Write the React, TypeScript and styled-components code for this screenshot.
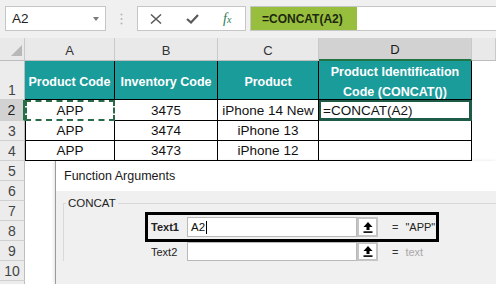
import * as React from 'react';
import styled, { createGlobalStyle } from 'styled-components';

const GlobalStyle = createGlobalStyle`
  html, body {
    margin: 0;
    padding: 0;
    background: #fff;
  }
  body {
    overflow: hidden;
  }
`;

const Screen = styled.div`
  position: relative;
  width: 496px;
  height: 284px;
  overflow: hidden;
  background: #fff;
  font-family: "Liberation Sans", Arial, sans-serif;
`;

// formula bar

const FormulaBar = styled.div`
  display: flex;
  align-items: flex-start;
  height: 38px;
  box-sizing: border-box;
  padding: 6px 0 0 5px;
  background: #f0f0f0;
`;

const NameBox = styled.div`
  display: flex;
  align-items: center;
  justify-content: space-between;
  width: 101px;
  height: 25px;
  box-sizing: border-box;
  padding: 0 6px;
  border: 1px solid #c6c6c6;
  background: #fff;
  font-size: 13.5px;
  color: #222;
`;

const DropArrow = styled.span`
  width: 0;
  height: 0;
  border-left: 3.5px solid transparent;
  border-right: 3.5px solid transparent;
  border-top: 4px solid #7a7a7a;
`;

const Grip = styled.div`
  display: flex;
  align-items: center;
  justify-content: center;
  width: 31px;
  height: 25px;
`;

const FxBox = styled.div`
  display: flex;
  align-items: center;
  gap: 24px;
  width: 109px;
  height: 25px;
  box-sizing: border-box;
  padding-left: 12px;
  border: 1px solid #c6c6c6;
  background: #fff;
`;

const FxGlyph = styled.span`
  font-family: "Liberation Serif", "Times New Roman", serif;
  font-style: italic;
  font-size: 14px;
  color: #2e7a56;
  line-height: 1;

  small {
    font-size: 10px;
  }
`;

const FormulaInput = styled.div`
  display: flex;
  flex: 1;
  height: 25px;
  margin-left: 4px;
  box-sizing: border-box;
  border: 1px solid #c6c6c6;
  border-right: none;
  background: #fff;
`;

const FormulaMark = styled.div`
  display: flex;
  align-items: center;
  width: 106px;
  box-sizing: border-box;
  padding-left: 11px;
  background: #97bf3d;
  font-size: 12px;
  font-weight: bold;
  color: #1d2710;
`;

// sheet grid

const Sheet = styled.div`
  display: grid;
  grid-template-columns: 25px 90px 103px 101px 153px 1fr;
  grid-template-rows: 23px 39px 21px 20px 20px repeat(7, 20px);
`;

const Corner = styled.div`
  display: flex;
  align-items: flex-end;
  justify-content: flex-end;
  padding: 0 2px 4px 0;
  background: #e9e9e9;
  border-right: 1px solid #c9c9c9;
  border-bottom: 1px solid #bdbdbd;
`;

const ColHead = styled.div<{ $active?: boolean }>`
  display: flex;
  align-items: center;
  justify-content: center;
  padding-top: 2px;
  background: ${(p) => (p.$active ? '#d2d2d2' : '#e9e9e9')};
  border-right: 1px solid #c9c9c9;
  border-bottom: ${(p) => (p.$active ? '2px solid #217346' : '1px solid #bdbdbd')};
  font-size: 13px;
  color: ${(p) => (p.$active ? '#1b1b1b' : '#333')};
`;

const RowHead = styled.div<{ $active?: boolean; $tall?: boolean }>`
  display: flex;
  align-items: ${(p) => (p.$tall ? 'flex-end' : 'center')};
  justify-content: center;
  padding-bottom: ${(p) => (p.$tall ? '1px' : '0')};
  background: ${(p) => (p.$active ? '#d2d2d2' : '#ececec')};
  border-right: ${(p) => (p.$active ? '2px solid #217346' : '1px solid #bdbdbd')};
  border-bottom: 1px solid #d0d0d0;
  font-size: 14px;
  color: ${(p) => (p.$active ? '#222' : '#444')};
`;

const HeadCell = styled.div`
  display: flex;
  align-items: center;
  justify-content: center;
  padding-top: 4px;
  background: #1a9c9b;
  border-right: 1px solid #000;
  border-bottom: 1px solid #000;
  font-size: 12.5px;
  font-weight: bold;
  line-height: 20px;
  color: #fff;
  text-align: center;
`;

const DataCell = styled.div<{
  $first?: boolean;
  $left?: boolean;
  $marquee?: boolean;
  $selected?: boolean;
}>`
  display: flex;
  align-items: center;
  justify-content: ${(p) => (p.$left ? 'flex-start' : 'center')};
  padding: 0 2px;
  overflow: hidden;
  white-space: nowrap;
  border-right: 1px solid #000;
  border-bottom: 1px solid #000;
  border-left: ${(p) => (p.$first ? '1px solid #000' : 'none')};
  font-size: 13.5px;
  color: #111;

  ${(p) => p.$marquee && 'border: 2px dashed #2a6a48;'}
  ${(p) => p.$selected && 'border: 2px solid #1d5a48; border-right-width: 3px; border-bottom-width: 3px;'}
`;

const Blank = styled.div``;

// dialog

const Dialog = styled.div`
  position: absolute;
  left: 55px;
  top: 161px;
  right: 0;
  bottom: 0;
  display: flex;
  flex-direction: column;
  border-left: 1px solid #9c9c9c;
  box-shadow: -1px 0 3px rgba(0, 0, 0, 0.12);
`;

const TitleBar = styled.div`
  display: flex;
  align-items: center;
  height: 30px;
  padding-left: 8px;
  background: #fff;
  font-size: 12.5px;
  color: #1a1a1a;
`;

const DialogBody = styled.div`
  flex: 1;
  padding: 5px 0 0 7px;
  background: #f0f0f0;
`;

const Group = styled.fieldset`
  margin: 0;
  min-width: 0;
  padding: 2px 0 0 0;
  border: 1px solid #d9d9d9;
  border-right: none;
  border-bottom: none;
`;

const GroupLabel = styled.legend`
  margin-left: 2px;
  padding: 0 2px;
  font-size: 11.5px;
  line-height: 14px;
  color: #222;
`;

const ArgList = styled.div`
  display: flex;
  flex-direction: column;
  margin-left: 81px;
`;

const ArgRow = styled.div<{ $boxed?: boolean }>`
  display: flex;
  align-items: center;
  width: 294px;
  height: ${(p) => (p.$boxed ? '30px' : '19px')};
  box-sizing: border-box;
  padding-left: ${(p) => (p.$boxed ? '3px' : '6px')};
  border: ${(p) => (p.$boxed ? '3px solid #000' : 'none')};
`;

const ArgLabel = styled.span<{ $strong?: boolean }>`
  width: 36px;
  font-size: 11px;
  font-weight: ${(p) => (p.$strong ? 'bold' : 'normal')};
  color: #222;
`;

const ArgInput = styled.div<{ $h: number }>`
  display: flex;
  align-items: center;
  width: 170px;
  height: ${(p) => p.$h}px;
  box-sizing: border-box;
  padding-left: 3px;
  border: 1px solid #b9b9b9;
  background: #fff;
  font-size: 11.5px;
  color: #111;
`;

const Caret = styled.span`
  width: 1px;
  height: 13px;
  margin-left: 1px;
  background: #000;
`;

const RefButton = styled.div<{ $h: number }>`
  display: flex;
  align-items: center;
  justify-content: center;
  width: 21px;
  height: ${(p) => p.$h}px;
  box-sizing: border-box;
  border: 2px solid #c4c4c4;
  background: #fff;
`;

const Equals = styled.span`
  margin-left: 14px;
  font-size: 11px;
  color: #333;
`;

const ArgValue = styled.span<{ $muted?: boolean }>`
  margin-left: 7px;
  font-size: 11px;
  color: ${(p) => (p.$muted ? '#a8a8a8' : '#222')};
`;

const UpArrow = () => (
  <svg width="10" height="11" viewBox="0 0 10 11">
    <path d="M5 0 L9.5 5 H6.5 V8 H3.5 V5 H0.5 Z" fill="#000" />
    <rect x="0.5" y="9.3" width="9" height="1.6" fill="#000" />
  </svg>
);

const rows = [
  ['APP', '3475', 'iPhone 14 New', '=CONCAT(A2)'],
  ['APP', '3474', 'iPhone 13', ''],
  ['APP', '3473', 'iPhone 12', ''],
];

const headers = ['Product Code', 'Inventory Code', 'Product'];

export default function App() {
  return (
    <Screen>
      <GlobalStyle />
      <FormulaBar>
        <NameBox>
          A2
          <DropArrow />
        </NameBox>
        <Grip>
          <svg width="3" height="12" viewBox="0 0 3 12">
            <circle cx="1.5" cy="1.5" r="1" fill="#b5b5b5" />
            <circle cx="1.5" cy="6" r="1" fill="#b5b5b5" />
            <circle cx="1.5" cy="10.5" r="1" fill="#b5b5b5" />
          </svg>
        </Grip>
        <FxBox>
          <svg width="12" height="10" viewBox="0 0 12 10">
            <path d="M1 0.5 L11 9.5 M11 0.5 L1 9.5" stroke="#5a5a5a" strokeWidth="1.5" />
          </svg>
          <svg width="13" height="10" viewBox="0 0 13 10">
            <path d="M1 5 L5 8.5 L12 1" stroke="#5a5a5a" strokeWidth="2.2" fill="none" />
          </svg>
          <FxGlyph>
            f<small>x</small>
          </FxGlyph>
        </FxBox>
        <FormulaInput>
          <FormulaMark>=CONCAT(A2)</FormulaMark>
        </FormulaInput>
      </FormulaBar>

      <Sheet>
        <Corner>
          <svg width="11" height="11" viewBox="0 0 11 11">
            <polygon points="11,0 11,11 0,11" fill="#b8b8b8" />
          </svg>
        </Corner>
        <ColHead>A</ColHead>
        <ColHead>B</ColHead>
        <ColHead>C</ColHead>
        <ColHead $active>D</ColHead>
        <ColHead />

        <RowHead $tall>1</RowHead>
        {headers.map((h) => (
          <HeadCell key={h}>{h}</HeadCell>
        ))}
        <HeadCell>
          Product Identification
          <br />
          Code (CONCAT())
        </HeadCell>
        <Blank />

        {rows.map((r, i) => (
          <React.Fragment key={i}>
            <RowHead $active={i === 0}>{i + 2}</RowHead>
            <DataCell $first $marquee={i === 0}>
              {r[0]}
            </DataCell>
            <DataCell>{r[1]}</DataCell>
            <DataCell>{r[2]}</DataCell>
            <DataCell $left $selected={i === 0}>
              {r[3]}
            </DataCell>
            <Blank />
          </React.Fragment>
        ))}

        {[5, 6, 7, 8, 9, 10, 0].map((n) => (
          <React.Fragment key={n}>
            <RowHead>{n > 0 ? n : ''}</RowHead>
            <Blank />
            <Blank />
            <Blank />
            <Blank />
            <Blank />
          </React.Fragment>
        ))}
      </Sheet>

      <Dialog>
        <TitleBar>Function Arguments</TitleBar>
        <DialogBody>
          <Group>
            <GroupLabel>CONCAT</GroupLabel>
            <ArgList>
              <ArgRow $boxed>
                <ArgLabel $strong>Text1</ArgLabel>
                <ArgInput $h={20}>
                  A2
                  <Caret />
                </ArgInput>
                <RefButton $h={20}>
                  <UpArrow />
                </RefButton>
                <Equals>=</Equals>
                <ArgValue>"APP"</ArgValue>
              </ArgRow>
              <ArgRow>
                <ArgLabel>Text2</ArgLabel>
                <ArgInput $h={19} />
                <RefButton $h={19}>
                  <UpArrow />
                </RefButton>
                <Equals>=</Equals>
                <ArgValue $muted>text</ArgValue>
              </ArgRow>
            </ArgList>
          </Group>
        </DialogBody>
      </Dialog>
    </Screen>
  );
}
